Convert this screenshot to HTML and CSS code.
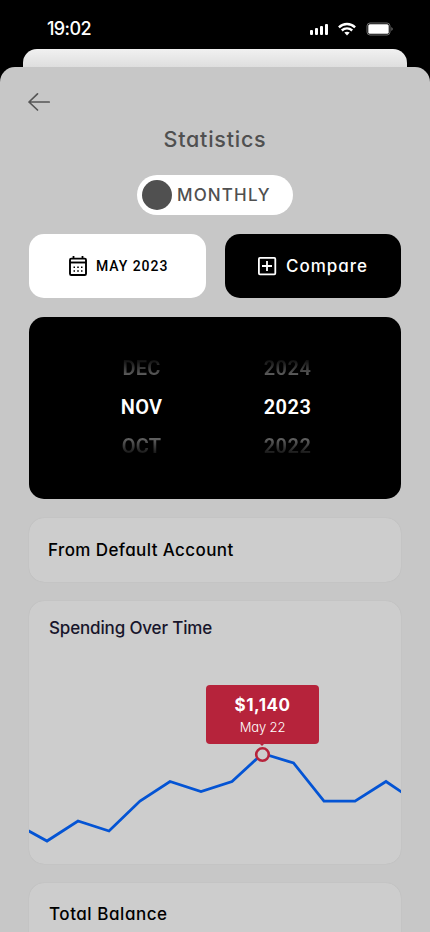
FILE: index.html
```html
<!DOCTYPE html>
<html lang="en">
<head>
<meta charset="utf-8">
<title>Statistics</title>
<link rel="stylesheet" href="styles.css">
</head>
<body>
<header class="status">
  <span class="time">19:02</span>
  <svg class="signal" width="20" height="14" viewBox="0 0 20 14" fill="#fff"><rect x="1" y="8" width="3" height="5" rx="1"/><rect x="6" y="6" width="3" height="7" rx="1"/><rect x="11" y="4" width="3" height="9" rx="1"/><rect x="16" y="2" width="3" height="11" rx="1"/></svg>
  <svg class="wifi" width="18" height="14" viewBox="0 0 18 14" fill="none" stroke="#fff" stroke-width="2.400"><path d="M.9 5.300C5.500.9 12.500.9 17.100 5.300"/><path d="M3.800 8.500c3-2.800 7.400-2.800 10.400 0"/><path d="M6.300 10.600L9 13.400l2.700-2.800c-1.600-1.300-3.800-1.300-5.400 0z" fill="#fff" stroke="none"/></svg>
  <svg class="battery" width="28" height="14" viewBox="0 0 28 14"><rect x="1" y="1" width="23" height="12" rx="3" fill="none" stroke="#6a6a6a"/><rect x="2.300" y="2.300" width="20.400" height="9.400" rx="1.500" fill="#fff"/><path d="M25.300 5q3 2 0 4z" fill="#6a6a6a"/></svg>
</header>
<div class="back-sheet"></div>
<main class="sheet">
  <svg class="back" width="24" height="22" viewBox="0 0 24 22" fill="none" stroke="#555" stroke-width="1.700" stroke-linecap="round" stroke-linejoin="round"><path d="M22.200 11H2M10.500 2.800L2 11l8.500 8"/></svg>
  <h1 class="title">Statistics</h1>
  <div class="toggle"><span class="knob"></span><span class="toggle-label">MONTHLY</span></div>
  <div class="actions">
    <button class="btn date">
      <svg width="20" height="22" viewBox="0 0 20 22"><path d="M5.500 1v3M14.500 1v3" stroke="#000" stroke-width="1.800"/><rect x="2" y="3.600" width="16" height="16.400" rx="1.300" fill="none" stroke="#000" stroke-width="1.900"/><path d="M2 7.500h16" stroke="#000" stroke-width="1.900"/><path d="M5.500 12.200H7m2.200 0h1.600m2.200 0h1.500M5.500 16H7m2.200 0h1.600m2.200 0h1.500" stroke="#000" stroke-width="1.600"/></svg>
      <span class="date-label">MAY 2023</span>
    </button>
    <button class="btn compare">
      <svg width="20" height="20" viewBox="0 0 20 20" fill="none" stroke="#fff" stroke-width="1.800"><rect x="1.900" y="1.900" width="16.400" height="16.400" rx="1"/><path d="M10 5v10M5 10h10"/></svg>
      <span class="compare-label">Compare</span>
    </button>
  </div>
  <section class="picker">
    <div class="wheel month"><span>DEC</span><strong>NOV</strong><span>OCT</span></div>
    <div class="wheel year"><span>2024</span><strong>2023</strong><span>2022</span></div>
  </section>
  <section class="card account"><span class="t-account">From Default Account</span></section>
  <section class="card chart-card">
    <h2 class="t-spending">Spending Over Time</h2>
    <svg class="chart" width="372" height="120" viewBox="0 0 372 120" fill="none"><path d="M-1 85.500L18 96l31-20 31 10 31-30 30-19.500 31 10 31-10L233.500 8.500 264.500 18l30.500 38.200h31L357 36.500l17 11.500" stroke="#0454d4" stroke-width="2.800"/><circle cx="233.500" cy="9.500" r="6.300" fill="#cdcdcd" stroke="#b6233b" stroke-width="2.600"/></svg>
    <div class="tip"><b>$1,140</b><span>May 22</span></div>
  </section>
  <section class="card balance"><span class="t-balance">Total Balance</span></section>
</main>
</body>
</html>
```

FILE: styles.css
```css
* { box-sizing: border-box; }
body {
  margin: 0;
  height: 932px;
  overflow: hidden;
  background: #000;
  display: flex;
  flex-direction: column;
  font-family: Inter, sans-serif;
  font-feature-settings: "cv11";
  color: #000;
}
h1, h2 { margin: 0; font-weight: 500; }
svg { display: block; flex: none; }
span, b, strong, h1, h2 { white-space: nowrap; }
.status {
  height: 49px;
  flex: none;
  display: flex;
  align-items: center;
  padding: 8px 36px 0 47px;
  color: #fff;
}
.time { font-size: 18px; font-weight: 500; letter-spacing: -.6px; margin-right: auto; }
.signal { margin-right: 9px; }
.wifi { margin-right: 10px; }
.back-sheet {
  height: 32px;
  flex: none;
  margin: 0 23px -14px;
  border-radius: 14px 14px 0 0;
  background: linear-gradient(#f1f1f1, #dedede 18px);
}
.sheet {
  flex: 1;
  min-height: 0;
  overflow: hidden;
  padding: 24px 29px 0;
  border-radius: 15px 15px 0 0;
  background: #c7c7c7;
  display: flex;
  flex-direction: column;
}
.back { margin-left: -2px; }
.title {
  height: 30px;
  line-height: 30px;
  margin-top: 11px;
  text-align: center;
  font-size: 21.500px;
  letter-spacing: .75px;
  color: #505050;
}
.toggle {
  width: 156px;
  height: 40px;
  flex: none;
  margin: 21px auto 19px;
  padding-left: 5px;
  border-radius: 20px;
  background: #fff;
  display: flex;
  align-items: center;
}
.knob { width: 30px; height: 30px; border-radius: 50%; background: #505050; }
.toggle-label { margin-left: 5px; font-size: 17px; font-weight: 500; color: #505050; letter-spacing: 1.150px; }
.actions { display: grid; grid-template-columns: 1fr 1fr; gap: 19px; flex: none; }
.btn {
  min-width: 0;
  height: 64px;
  border: 0;
  padding: 0;
  border-radius: 15px;
  display: flex;
  align-items: center;
  font-family: inherit;
  font-feature-settings: inherit;
}
.date { background: #fff; color: #000; padding-left: 39px; gap: 8px; }
.date-label { font: 500 14px Roboto, sans-serif; letter-spacing: .95px; }
.compare { background: #000; color: #fff; padding-left: 32.500px; gap: 9px; }
.compare-label { font-size: 17px; font-weight: 450; letter-spacing: 1px; }
.picker {
  height: 182px;
  flex: none;
  margin: 19px 0;
  border-radius: 15px;
  background: #000;
  display: grid;
  grid-template-columns: 145px 147px;
  align-content: center;
  padding: 0 0 2px 40px;
  color: #fff;
}
.wheel {
  display: grid;
  grid-template-rows: repeat(3, 39px);
  align-items: center;
  justify-items: center;
  font: 600 20px Roboto, sans-serif;
  letter-spacing: .2px;
}
.year { letter-spacing: .5px; }
.wheel strong { font-weight: 600; }
.wheel span {
  color: transparent;
  background: linear-gradient(#000 1px, #5c5c5c 19px);
  -webkit-background-clip: text;
  background-clip: text;
}
.wheel span:last-child { background-image: linear-gradient(#606060 5px, #141414 20px); }
.card {
  flex: none;
  border-radius: 15px;
  background: #cdcdcd;
  box-shadow: 0 0 1px rgba(0, 0, 0, .12);
}
.account { height: 64px; display: flex; align-items: center; padding-left: 19px; }
.t-account, .t-balance { font-size: 17px; font-weight: 500; }
.t-account { letter-spacing: .4px; }
.chart-card {
  position: relative;
  height: 263px;
  margin: 19px 0;
  padding-top: 15px;
  overflow: hidden;
}
.t-spending { padding-left: 20px; height: 24px; line-height: 24px; font-size: 17px; letter-spacing: -.15px; color: #17152b; }
.chart { margin-top: 105px; }
.tip {
  position: absolute;
  left: 177px;
  top: 84px;
  width: 113px;
  height: 59px;
  padding-top: 9px;
  border-radius: 4px;
  background: #b6233b;
  color: #fff;
  text-align: center;
}
.tip::after {
  content: "";
  position: absolute;
  left: 54px;
  top: 59px;
  border: 2.500px solid transparent;
  border-top-color: #b6233b;
  border-bottom: 0;
}
.tip b, .tip span { display: block; }
.tip b { font-size: 17px; line-height: 22px; font-weight: 700; letter-spacing: .5px; }
.tip span { font-size: 13px; line-height: 22px; font-weight: 350; letter-spacing: -.15px; }
.balance { height: 90px; padding: 19px 20px; }
.t-balance { display: block; line-height: 24px; letter-spacing: .55px; }
```
